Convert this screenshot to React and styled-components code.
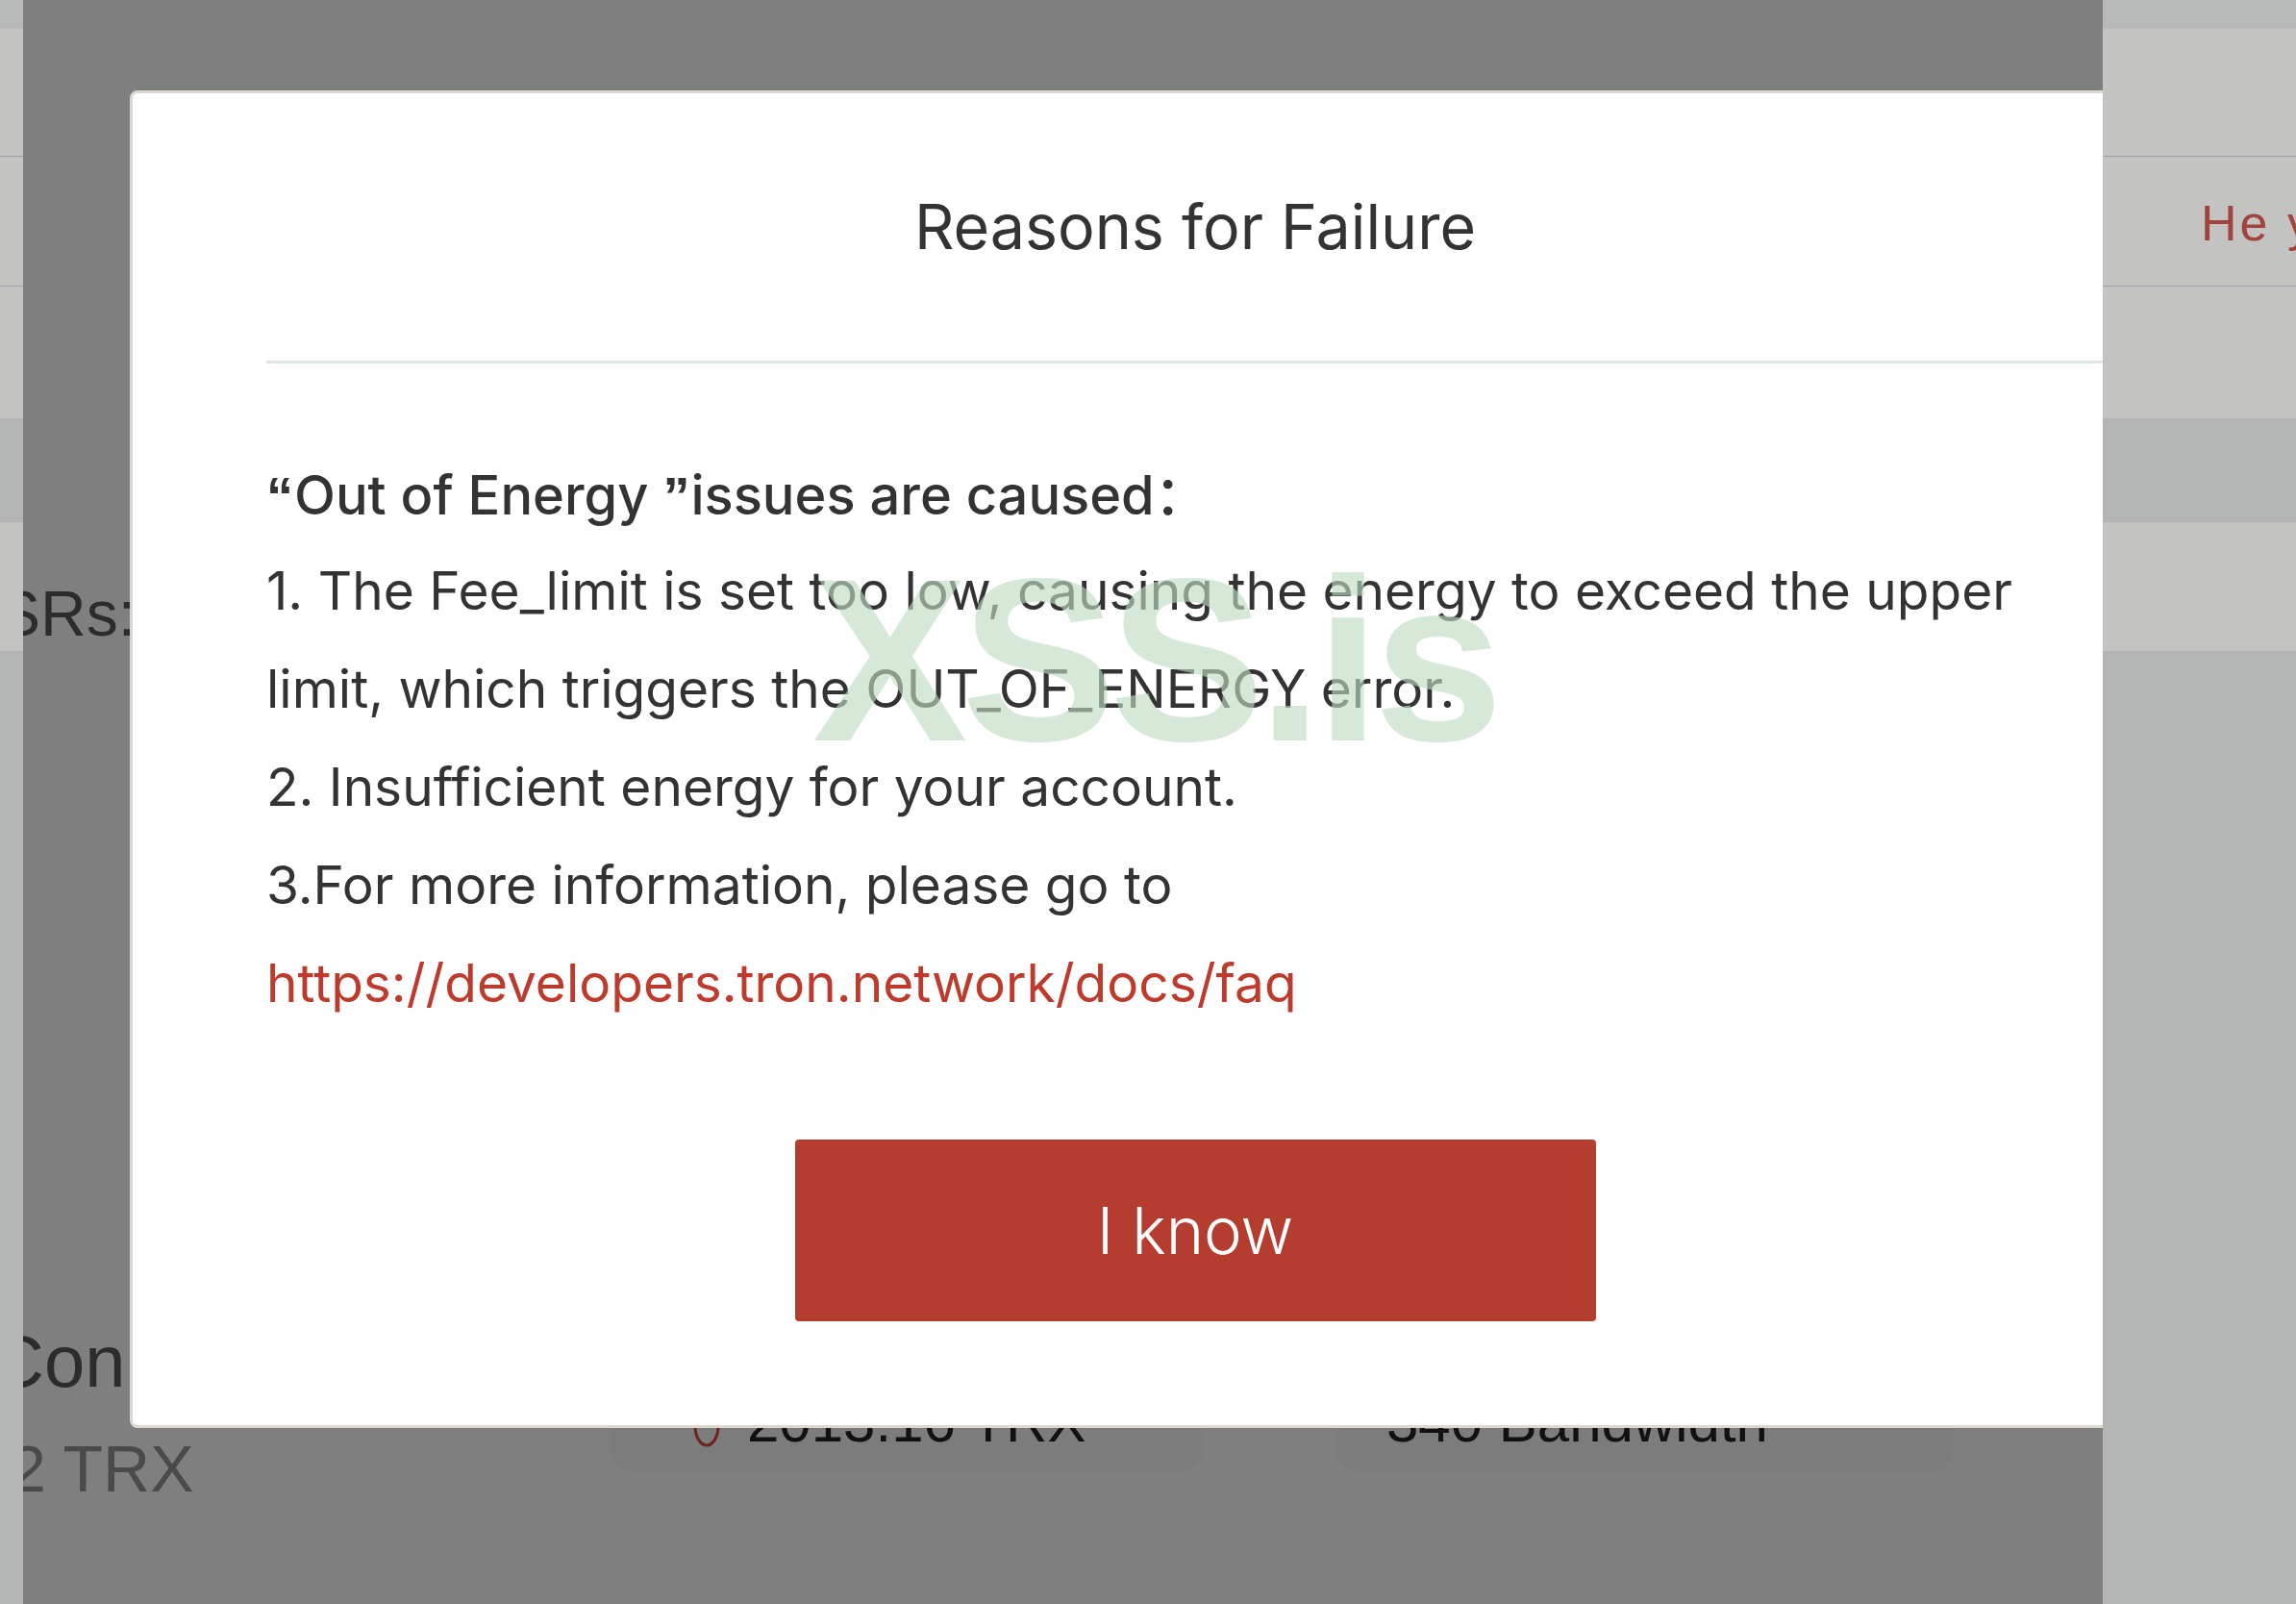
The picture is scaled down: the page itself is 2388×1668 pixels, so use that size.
import React from 'react'
import styled, { createGlobalStyle } from 'styled-components'

const GlobalStyle = createGlobalStyle`
  html, body {
    margin: 0;
    padding: 0;
  }
  body {
    width: 2388px;
    height: 1668px;
    overflow: hidden;
    font-family: Inter, "Noto Sans", "Noto Sans CJK SC", sans-serif;
  }
  * {
    box-sizing: border-box;
  }
`

const bands = [
  { h: 30, tone: 'top' },
  { h: 133, tone: 'light', line: true },
  { h: 135, tone: 'light', line: true, label: true },
  { h: 137, tone: 'light' },
  { h: 108, tone: 'dark' },
  { h: 134, tone: 'light' },
]

const App = () => (
  <>
    <GlobalStyle />
    <Screen>
      <SideStrip width={24}>
        {bands.map((b, i) => (
          <Band key={i} h={b.h} tone={b.tone} line={b.line} />
        ))}
        <Band tone="dark" fill />
      </SideStrip>

      <Stage>
        <PageBody>
          <SectionTitle>SRs:</SectionTitle>
          <SummaryRow>
            <Totals>
              <TotalsLabel>Con</TotalsLabel>
              <TotalsValue>2 TRX</TotalsValue>
            </Totals>
            <StatCard width={616} indent={80}>
              <TrxIcon width="40" height="46" viewBox="0 0 40 46">
                <ellipse cx="20" cy="23" rx="12" ry="20" fill="none" stroke="#e0473a" strokeWidth="3" />
              </TrxIcon>
              <StatText>2013.16 TRX</StatText>
            </StatCard>
            <StatCard width={642} indent={53}>
              <StatText>340 Bandwidth</StatText>
            </StatCard>
          </SummaryRow>
        </PageBody>

        <Backdrop />

        <Modal>
          <ModalHeader>
            <Title>Reasons for Failure</Title>
          </ModalHeader>
          <Divider />
          <ModalBody>
            <Lead>
              <Quote>“</Quote>Out of Energy <Quote>”</Quote>issues are caused：
            </Lead>
            <Line>1. The Fee_limit is set too low, causing the energy to exceed the upper limit, which triggers the OUT_OF_ENERGY error.</Line>
            <Line>2. Insufficient energy for your account.</Line>
            <Line>3.For more information, please go to</Line>
            <Line>
              <DocLink href="https://developers.tron.network/docs/faq">https://developers.tron.network/docs/faq</DocLink>
            </Line>
          </ModalBody>
          <Actions>
            <ConfirmButton type="button">I know</ConfirmButton>
          </Actions>
          <Watermark>XSS.is</Watermark>
        </Modal>
      </Stage>

      <SideStrip width={201}>
        {bands.map((b, i) => (
          <Band key={i} h={b.h} tone={b.tone} line={b.line}>
            {b.label && <StripLabel>He you</StripLabel>}
          </Band>
        ))}
        <Band tone="dark" fill />
      </SideStrip>
    </Screen>
  </>
)

export default App

const Screen = styled.div`
  display: flex;
  width: 2388px;
  height: 1668px;
`

const SideStrip = styled.aside`
  width: ${p => p.width}px;
  flex-shrink: 0;
  display: flex;
  flex-direction: column;
  overflow: hidden;
  background: #b4b5b5;
`

const bandColors = {
  top: '#b8b9b9',
  light: '#c3c3c2',
  dark: '#b4b5b5',
}

const Band = styled.div`
  height: ${p => (p.fill ? 'auto' : `${p.h}px`)};
  flex: ${p => (p.fill ? '1' : '0 0 auto')};
  background: ${p => bandColors[p.tone]};
  border-bottom: ${p => (p.line ? '1px solid #9e9f9f' : 'none')};
  display: flex;
  align-items: center;
  padding-left: 102px;
  white-space: nowrap;
`

const StripLabel = styled.span`
  font-family: "Liberation Sans", Arial, sans-serif;
  font-size: 52px;
  letter-spacing: 3px;
  color: #a0443d;
  margin-top: 4px;
`

const Stage = styled.main`
  flex: 1;
  position: relative;
  overflow: hidden;
  background: #fff;
`

const PageBody = styled.div`
  display: flex;
  flex-direction: column;
  padding-top: 598px;
  font-family: "Liberation Sans", Arial, sans-serif;
`

const SectionTitle = styled.h2`
  margin: 0 0 0 -26px;
  font-size: 66px;
  line-height: 80px;
  font-weight: 400;
  color: #585858;
`

const SummaryRow = styled.div`
  display: flex;
  align-items: flex-start;
  gap: 138px;
  margin-top: 698px;
`

const Totals = styled.div`
  width: 506px;
  margin-left: -33px;
  flex-shrink: 0;
  display: flex;
  flex-direction: column;
`

const TotalsLabel = styled.div`
  font-size: 76px;
  line-height: 80px;
  color: #585858;
`

const TotalsValue = styled.div`
  margin-top: 35px;
  margin-left: 19px;
  font-size: 68px;
  line-height: 72px;
  color: #959595;
`

const StatCard = styled.div`
  width: ${p => p.width}px;
  flex-shrink: 0;
  height: 140px;
  margin-top: 14px;
  padding: 54px 0 0 ${p => p.indent}px;
  display: flex;
  align-items: flex-start;
  gap: 22px;
  background: #f8f8f8;
  border-radius: 22px;
`

const TrxIcon = styled.svg`
  flex-shrink: 0;
  margin-top: 16px;
`

const StatText = styled.span`
  font-size: 60px;
  line-height: 70px;
  color: #222;
`

const Backdrop = styled.div`
  position: absolute;
  inset: 0;
  background: rgba(0, 0, 0, 0.5);
`

const Modal = styled.section`
  position: absolute;
  left: 111px;
  top: 94px;
  width: 2216px;
  height: 1391px;
  display: flex;
  flex-direction: column;
  background: #fff;
  border: 3px solid #dcd8d0;
  border-radius: 8px;
  color: #333;
`

const ModalHeader = styled.header`
  height: 278px;
  display: flex;
  align-items: center;
  justify-content: center;
`

const Title = styled.h1`
  margin: 0;
  font-size: 64.5px;
  line-height: 76px;
  font-weight: 400;
  color: #333;
`

const Divider = styled.hr`
  margin: 0 139px;
  height: 3px;
  border: 0;
  background: #dde6dc;
`

const ModalBody = styled.div`
  padding: 90px 139px 0;
  font-size: 55px;
`

const Lead = styled.p`
  margin: 0;
  line-height: 94px;
  font-weight: 500;
  font-size: 56px;
  white-space: nowrap;
`

const Quote = styled.span`
  font-family: "Liberation Sans", Arial, sans-serif;
  font-weight: 700;
  margin-right: 1px;
`

const Line = styled.p`
  margin: 0;
  line-height: 102px;
  font-weight: 400;
`

const DocLink = styled.a`
  color: #bd3a2c;
  text-decoration: none;
`

const Actions = styled.div`
  display: flex;
  justify-content: center;
  margin-top: 112px;
`

const ConfirmButton = styled.button`
  width: 833px;
  height: 189px;
  border: 0;
  border-radius: 4px;
  background: #b53d30;
  color: #fff;
  font-family: Inter, "Noto Sans", sans-serif;
  font-size: 67px;
  font-weight: 300;
  cursor: pointer;
`

const Watermark = styled.div`
  position: absolute;
  left: 707px;
  top: 468px;
  font-family: "Liberation Sans", Arial, sans-serif;
  font-size: 242px;
  font-weight: 700;
  line-height: 1;
  letter-spacing: -7px;
  color: rgba(190, 220, 193, 0.63);
  pointer-events: none;
  white-space: nowrap;
`
